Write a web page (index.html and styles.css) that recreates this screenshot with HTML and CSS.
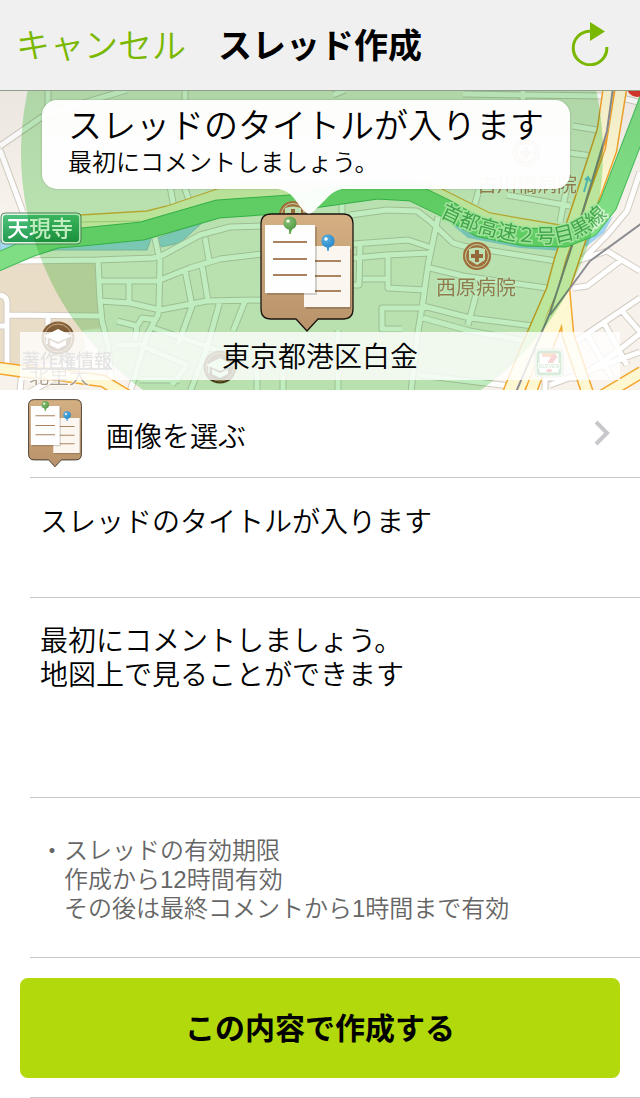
FILE: index.html
```html
<!DOCTYPE html>
<html lang="ja">
<head>
  <meta charset="UTF-8" />
  <meta name="viewport" content="width=device-width, initial-scale=1.0" />
  <title>スレッド作成</title>

  <link rel="stylesheet" href="styles.css">
</head>
<body>

<!-- Shared icon: cork board with two notes -->
<svg class="defs" aria-hidden="true">
  <defs>
    <linearGradient id="cork" x1="0" y1="0" x2="0" y2="1">
      <stop offset="0" stop-color="#d3af82" />
      <stop offset="1" stop-color="#b8926a" />
    </linearGradient>
    <radialGradient id="pinGreen" cx="0.35" cy="0.35" r="0.7">
      <stop offset="0" stop-color="#8cc473" />
      <stop offset="1" stop-color="#559a48" />
    </radialGradient>
    <radialGradient id="pinBlue" cx="0.35" cy="0.35" r="0.7">
      <stop offset="0" stop-color="#5bb3e4" />
      <stop offset="1" stop-color="#2888c8" />
    </radialGradient>
    <symbol id="board" viewBox="0 0 94 120">
      <path d="M11 1H83Q93 1 93 11V96Q93 106 83 106H58L47 118L36 106H11Q1 106 1 96V11Q1 1 11 1Z" fill="url(#cork)" stroke="#1c1510" stroke-width="1.3" />
      <path d="M46 36H91V96H46Z" fill="#000" opacity="0.16" />
      <path d="M44 33H90V94H44Z" fill="#fbf6ef" />
      <path d="M55 48H81M55 63H81M55 78H81" stroke="#ab8660" stroke-width="1.8" />
      <path d="M7 14H57V82H7Z" fill="#000" opacity="0.16" />
      <path d="M5 12H55V80H5Z" fill="#fefefe" />
      <path d="M13 29H47M13 46H47M13 62H47" stroke="#ab8260" stroke-width="1.8" />
      <path d="M29 15L30 21L32 15Z" fill="#5aa64a" stroke="#5aa64a" />
      <circle cx="30" cy="10" r="6.6" fill="url(#pinGreen)" />
      <circle cx="28" cy="8" r="1.6" fill="#fff" />
      <path d="M67 32L68 38L69 32Z" fill="#3294d0" stroke="#3294d0" />
      <circle cx="68" cy="28" r="6.6" fill="url(#pinBlue)" />
      <circle cx="66" cy="26" r="1.7" fill="#fff" />
    </symbol>
  </defs>
</svg>

<header class="navbar">
  <button type="button" class="cancel">キャンセル</button>
  <h1>スレッド作成</h1>
  <button type="button" class="reload" aria-label="更新">
    <svg width="38" height="46" viewBox="571 20 38 46">
      <path d="M606.8 47A16.8 16.8 0 1 1 590 31.2" fill="none" stroke="#7ab800" stroke-width="3" />
      <path d="M590 22L605 31.5L590 41Z" fill="#7ab800" />
    </svg>
  </button>
</header>

<!-- Map -->
<section class="map">
  <svg class="map-tiles" viewBox="0 91 640 299" preserveAspectRatio="xMidYMid slice">
    <defs>
      <path id="streets" d="M0 146L42 117L80 104L127 90M48 90V113M0 150L23 212M185 90V100M170 186L174 208M184 186L190 203
        M17 261L97 260L153 258L163 255L200 235L230 227L263 226
        M155 238L160 261L159 305L158 315L147 335L130 392
        M160 280L190 268L220 259L262 254M98 281H160M100 301L130 303L160 310L207 301L262 300
        M98 260L100 301L102 321L108 345L112 392M129 283V303M205 238L209 260M202 265L208 301M185 270L192 306L178 345
        M220 301L207 348L190 392M245 301L233 331M117 321L137 326L142 318L157 320M117 345L140 345L187 365M153 328L220 351
        M137 326L135 340M187 365L172 385M140 380H180M257 370V392M283 370V392M338 330V392
        M7 315L102 316M0 295Q7 296 7 303V368M0 326H9M48 315V325M22 368L20 392M30 392L55 378
        M342 200V214M350 215L387 210L417 211L430 221L453 243L463 246L493 251L556 261
        M438 217L428 265L423 301L417 338L411 392M353 244L408 240L432 248M353 258L387 255L430 253
        M360 243L359 285H352M363 279H387M388 256V288L425 290M430 268L463 276L547 288
        M425 308H382V329H402M423 306L470 318L533 326M423 318L470 331L527 341M477 291L468 325M420 375L510 386
        M573 126L597 130M570 153L592 156M463 94L602 96M523 90V100M333 95L345 90
        M577 261L607 251L640 271M573 288L587 286L620 261M575 342L640 298M603 321L627 365M622 311L642 334M587 334L612 378
        M583 375L610 357L642 332M550 385L640 352M640 172L627 211L607 235L584 258M618 97L642 103M545 390V378H590" />
      <path id="blockStreets" d="M480 186L475 204M507 195L570 206M567 186L560 222" />
      <path id="mainRoads" d="M609 88L603 130L577 210L560 260L552 290L528 345L508 394
        M621 88L611 150L593 200L575 255L560 300L538 345L517 394
        M564 290L568 335L588 394M564 305L548 345L530 394
        M602 396L642 372
        M-2 368L20 371L60 375L103 381L128 396" />
      <path id="expressway" d="M-5 263L30 248L57 239L82 237L142 231L218 209L290 204L320 198L377 190L412 192L445 208L480 228L525 237L565 238L590 228L608 205L640 122L652 90" />
      <path id="expresswayName" d="M440 216C470 232 510 243 545 243S602 226 628 190" />
      <linearGradient id="signGreen" x1="0" y1="0" x2="0" y2="1">
        <stop offset="0" stop-color="#4dc27c" />
        <stop offset="1" stop-color="#249a50" />
      </linearGradient>
      <linearGradient id="brown" x1="0" y1="0" x2="0" y2="1">
        <stop offset="0" stop-color="#8a663e" />
        <stop offset="1" stop-color="#5c4020" />
      </linearGradient>
      <linearGradient id="topShade" x1="0" y1="0" x2="0" y2="1">
        <stop offset="0" stop-color="#000" stop-opacity="0.05" />
        <stop offset="1" stop-color="#000" stop-opacity="0" />
      </linearGradient>
      <symbol id="hospital" viewBox="0 0 30 30">
        <circle cx="15" cy="15" r="14" fill="#d6764f" />
        <circle cx="15" cy="15" r="11.5" fill="none" stroke="#ffe9dc" stroke-width="1" />
        <path d="M7 8Q15 5 23 8V19L15 24L7 19Z" fill="#fdf3ee" />
        <path d="M13 9H17V13H21V17H17V21H13V17H9V13H13Z" fill="#c9714f" />
      </symbol>
      <symbol id="school" viewBox="0 0 34 34">
        <circle cx="17" cy="17" r="16.5" fill="url(#brown)" />
        <circle cx="17" cy="17" r="14" fill="none" stroke="#c9ac86" stroke-width="1" />
        <path d="M3 15L17 8L31 15L17 21Z" fill="#fff" />
        <path d="M9 19L17 23L25 19V24L17 28L9 24Z" fill="#fff" />
        <path d="M6 16V23" stroke="#fff" stroke-width="1.5" />
      </symbol>
    </defs>

    <rect x="0" y="90" width="640" height="300" fill="#f7f2eb" />
    <path d="M0 264L98 262L100 315L104 328L83 330L86 355L20 371L0 366Z" fill="#eaddc7" />

    <!-- river -->
    <path d="M0 240L57 243L152 236L147 250L55 250L0 262ZM157 238L203 222L180 243L161 247Z" fill="#a3d7ef" stroke="#9dc3cf" />
    <path d="M437 212L470 233L520 242L565 246L590 236L613 216L604 233L587 246L562 251L520 248L468 238Z" fill="#a0d3f0" />

    <use href="#streets" class="street-edge" />
    <use href="#streets" class="street" />
    <path d="M80 215L147 211L167 206L220 188L250 180L425 180L440 188L490 213L560 225L556 238L525 237L480 228L445 208L412 192L377 190L290 204L218 209L142 231L80 237Z" fill="#f8f4cc" />
    <use href="#blockStreets" class="street-edge" />
    <use href="#blockStreets" class="street" />
    <path d="M80 215L147 211L167 206L220 188M425 180L440 188L490 213L560 225" fill="none" stroke="#f0b440" stroke-width="1.3" />
    <path d="M82 222L140 221" stroke="#c8d890" />
    <use href="#mainRoads" class="main-edge" />
    <use href="#mainRoads" class="main-road" />
    <path d="M613 88L607 131L580 221L550 313L516 392M642 223L590 261L550 315" class="rail" />
    <use href="#expressway" class="express-edge" />
    <use href="#expressway" class="express" />
    <path d="M584 192L588 178M585 180L588 177L591 182" fill="none" stroke="#6cc4ea" stroke-width="2" />
    <circle cx="637" cy="87" r="10" fill="#d9382b" />

    <g class="place">
      <text x="477" y="192">古川橋病院</text>
      <text x="436" y="295">西原病院</text>
    </g>
    <text class="campus" x="29" y="384">北里大</text>
    <text class="road-name"><textPath href="#expresswayName">首都高速２号目黒線</textPath></text>
    <rect x="1" y="213" width="80" height="31" rx="4" fill="#e6f5ea" stroke="#5d8a68" />
    <rect x="3" y="215" width="76" height="27" rx="3" fill="url(#signGreen)" />
    <text class="sign" x="7" y="236">天現寺</text>

    <use href="#hospital" x="462" y="241" width="30" height="30" />
    <use href="#hospital" x="511" y="138" width="30" height="30" />
    <use href="#hospital" x="278" y="200" width="30" height="30" />
    <use href="#school" x="203" y="350" width="34" height="34" />

    <!-- search radius -->
    <circle class="radius" cx="312" cy="153" r="291" />

    <use href="#school" x="41" y="321" width="34" height="34" />
    <rect x="535" y="349" width="28" height="28" rx="4" fill="#fff" stroke="#b9b4ac" />
    <rect x="538" y="352" width="22" height="22" rx="2" fill="#fff" stroke="#3f9f4f" stroke-width="3" />
    <path d="M542 355H556" stroke="#e8772e" stroke-width="4" />
    <path d="M556 355Q549 361 549 372" fill="none" stroke="#d8392f" stroke-width="5" />
    <text class="seven" x="549" y="368">ELEVEN</text>
    <rect x="0" y="90" width="640" height="120" fill="url(#topShade)" />
    <a href="#"><text class="legal" x="22" y="367">著作権情報</text></a>
  </svg>

  <svg class="marker" width="94" height="120"><use href="#board" /></svg>

  <div class="callout">
    <p class="callout-title">スレッドのタイトルが入ります</p>
    <p class="callout-text">最初にコメントしましょう。</p>
    <svg class="callout-tail" width="64" height="25" viewBox="0 0 64 25">
      <path d="M0 0H64Q55 2 49 9L36 22Q31 27 26 22L15 8Q9 1 0 0Z" fill="#fff" fill-opacity="0.97" />
    </svg>
  </div>

  <p class="address">東京都港区白金</p>
</section>

<!-- Thread form -->
<form class="thread-form">
  <button type="button" class="row image-row">
    <svg width="54" height="69"><use href="#board" /></svg>
    <span>画像を選ぶ</span>
    <svg class="chevron" width="16" height="26" viewBox="0 0 16 26">
      <path d="M2 2L13 13L2 24" fill="none" stroke="#c7c7cc" stroke-width="4" />
    </svg>
  </button>

  <div class="row title-row">
    <input type="text" aria-label="タイトル" value="スレッドのタイトルが入ります" />
  </div>

  <div class="row comment-row">
    <textarea aria-label="コメント">最初にコメントしましょう。
地図上で見ることができます</textarea>
  </div>

  <div class="row note-row">
    <p>・スレッドの有効期限</p>
    <p class="indent">作成から12時間有効<br>その後は最終コメントから1時間まで有効</p>
  </div>

  <div class="row submit-row">
    <button type="submit" class="submit">この内容で作成する</button>
  </div>
</form>

</body>
</html>
```
FILE: styles.css
```css
* {
  box-sizing: border-box;
}

body {
  margin: 0;
  background-color: #fff;
  color: #000;
  font-family: "Liberation Sans", "Noto Sans CJK JP", sans-serif;
  font-size: 28px;
  font-weight: 350;
}

h1, p {
  margin: 0;
}

button, input, textarea {
  border: none;
  padding: 0;
  background: none;
  color: inherit;
  font: inherit;
}

button {
  cursor: pointer;
}

.defs {
  position: absolute;
  width: 0;
  height: 0;
}

/* Navigation bar */
.navbar {
  display: grid;
  grid-template-columns: 1fr auto 1fr;
  align-items: center;
  height: 91px;
  padding: 0 16px 4px;
  background-color: #f0f0f0;
  border-bottom: 1px solid #8f9f8c;
}

.navbar h1 {
  font-size: 34px;
  font-weight: 700;
}

.cancel {
  justify-self: start;
  color: #7ab800;
  font-size: 34px;
}

.reload {
  justify-self: end;
  display: flex;
  padding-right: 15px;
}

/* Map */
.map {
  position: relative;
  height: 299px;
  overflow: hidden;
}

.map-tiles {
  display: block;
  width: 100%;
  height: 100%;
  isolation: isolate;
}

.street-edge, .street, .main-edge, .main-road, .express-edge, .express, .rail {
  fill: none;
  stroke-linejoin: round;
}

.street-edge {
  stroke: #d3ccc2;
  stroke-width: 7px;
}

.street {
  stroke: #fff;
  stroke-width: 5px;
}

.main-edge {
  stroke: #f3a52c;
  stroke-width: 13px;
}

.main-road {
  stroke: #fdf8d2;
  stroke-width: 10px;
}

.express-edge {
  stroke: #45bd5c;
  stroke-width: 19px;
}

.express {
  stroke: #7fdd84;
  stroke-width: 17px;
}

.rail {
  stroke: #8b8d92;
  stroke-width: 2px;
}

.radius {
  fill: #bfedbf;
  mix-blend-mode: multiply;
}

.place {
  fill: #c08568;
  font-size: 20px;
  font-weight: 400;
}

.place text, .campus {
  stroke: #fff;
  stroke-opacity: 0.6;
  stroke-width: 2px;
  paint-order: stroke;
}

.campus {
  fill: #a89a8a;
  font-size: 20px;
}

.road-name {
  fill: #55b060;
  stroke: #d6f5cf;
  stroke-width: 3px;
  paint-order: stroke;
  font-size: 20px;
  font-weight: 400;
}

.sign {
  fill: #fff;
  font-size: 22px;
  font-weight: 500;
}

.seven {
  fill: #2f8f45;
  stroke: #fff;
  stroke-width: 2px;
  paint-order: stroke;
  font-size: 5px;
  font-weight: 700;
  text-anchor: middle;
}

.legal {
  fill: #777;
  font-size: 18px;
  font-weight: 500;
  text-decoration: underline;
}

.marker {
  position: absolute;
  top: 122px;
  left: 50%;
  margin-left: -60px;
}

.callout {
  position: absolute;
  top: 9px;
  left: 42px;
  right: 70px;
  height: 89px;
  padding: 4px 26px;
  border-radius: 15px;
  background-color: rgba(255, 255, 255, 0.97);
  box-shadow: 0 0 2px rgba(0, 0, 0, 0.25);
  white-space: nowrap;
}

.callout-title {
  font-size: 34px;
  line-height: 44px;
}

.callout-text {
  font-size: 24px;
  line-height: 30px;
}

.callout-tail {
  position: absolute;
  top: 100%;
  left: 50%;
  margin-left: -28px;
}

.address {
  position: absolute;
  left: 20px;
  right: 20px;
  bottom: 10px;
  height: 48px;
  background-color: rgba(255, 255, 255, 0.8);
  line-height: 52px;
  text-align: center;
}

/* Form rows */
.row {
  position: relative;
  display: block;
  width: 100%;
  padding: 20px 40px;
}

.row::after {
  content: "";
  position: absolute;
  left: 30px;
  right: 0;
  bottom: 0;
  border-bottom: 1px solid #c8c8c8;
}

.image-row {
  display: flex;
  align-items: center;
  gap: 24px;
  height: 88px;
  padding: 0 30px 2px 28px;
  text-align: left;
}

.image-row span {
  padding-top: 4px;
}

.chevron {
  margin-left: auto;
}

.title-row {
  height: 120px;
}

.title-row input {
  width: 100%;
  height: 44px;
}

.comment-row {
  height: 200px;
  padding: 27px 40px;
}

.comment-row textarea {
  display: block;
  width: 100%;
  height: 150px;
  line-height: 34px;
  resize: none;
}

.note-row {
  height: 160px;
  padding: 38px 40px;
  color: #666;
  font-size: 24px;
  line-height: 29px;
}

.note-row .indent {
  padding-left: 1em;
}

.submit-row {
  height: 140px;
  padding: 20px;
}

.submit {
  width: 100%;
  height: 100px;
  padding-bottom: 4px;
  border-radius: 8px;
  background-color: #b2d90b;
  font-size: 30px;
  font-weight: 700;
}
```
